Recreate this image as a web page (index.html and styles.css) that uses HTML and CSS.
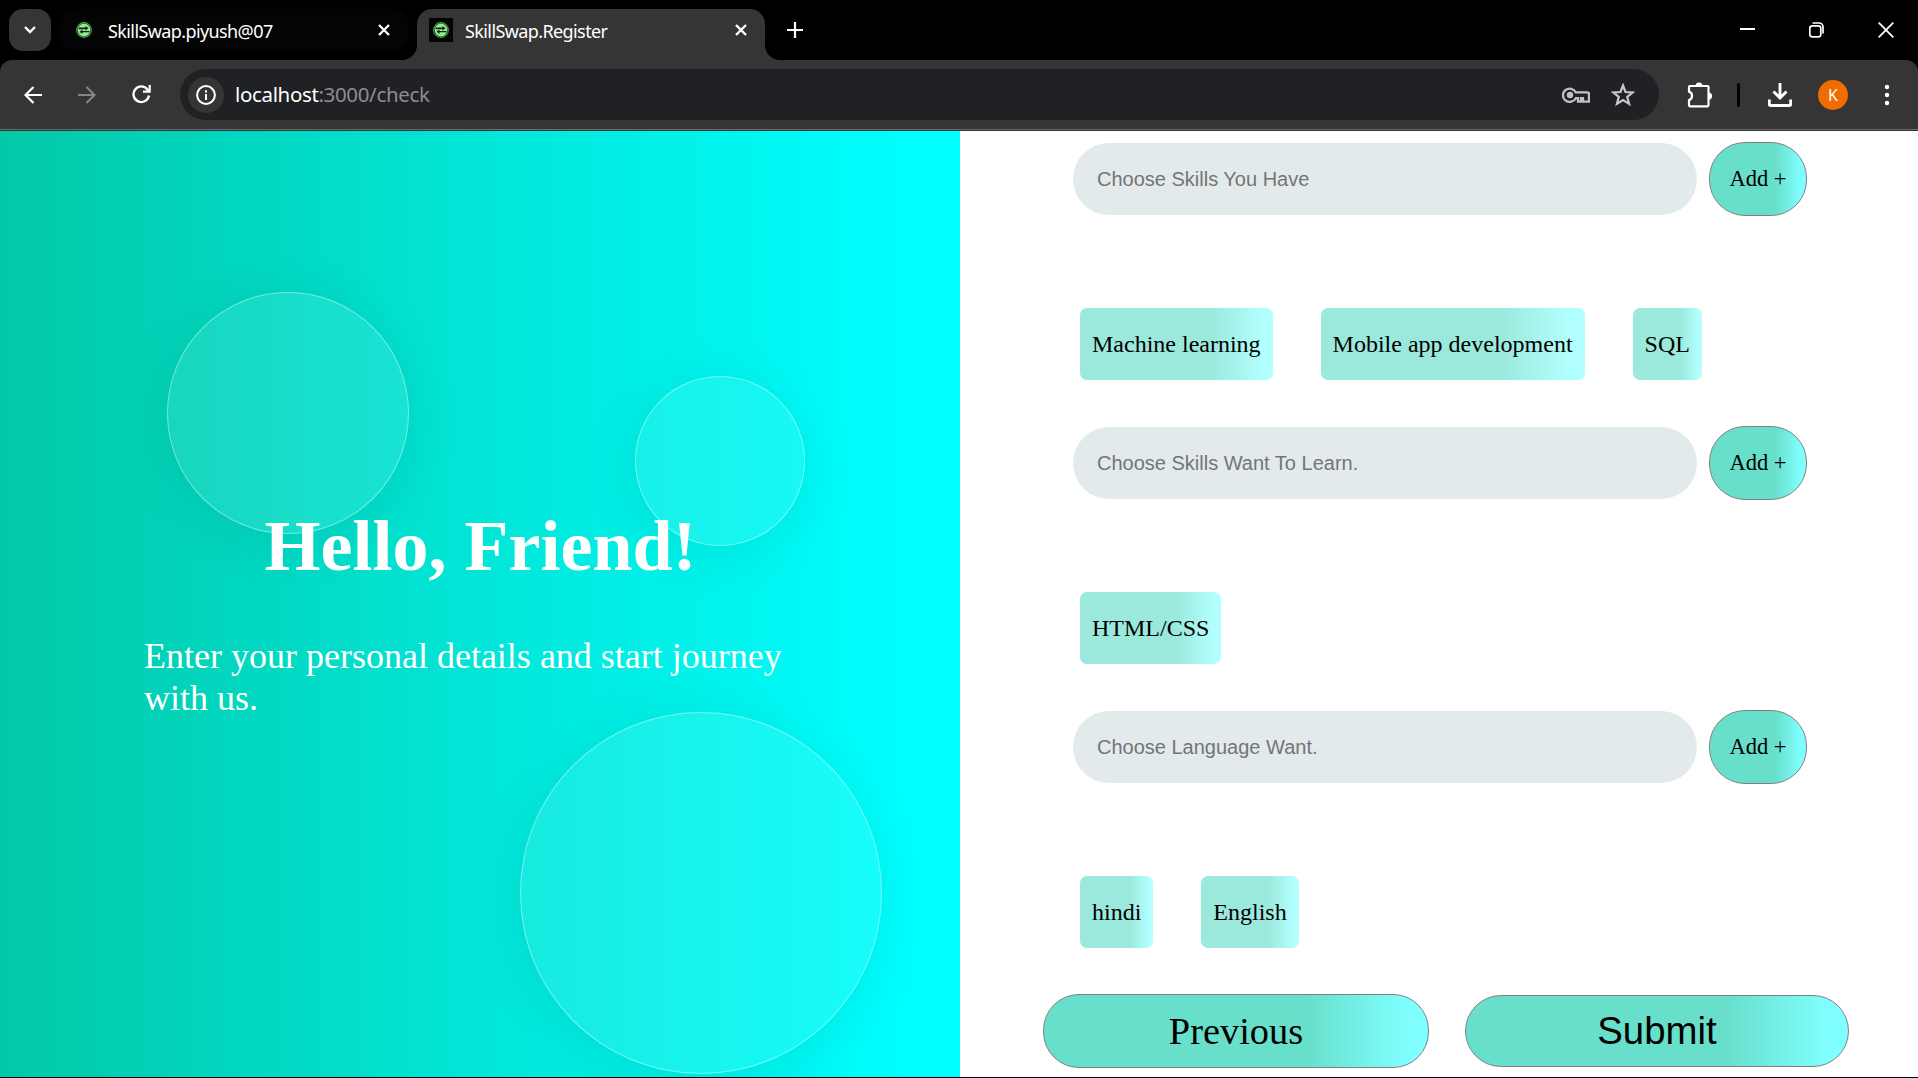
FILE: index.html
```html
<!DOCTYPE html>
<html lang="en">
<head>
<meta charset="utf-8">
<title>SkillSwap.Register</title>
<link rel="stylesheet" href="styles.css">
</head>
<body>
<svg class="defs" aria-hidden="true">
  <symbol id="favicon" viewBox="0 0 24 24">
    <rect width="24" height="24" fill="#020502"/>
    <circle cx="12" cy="12" r="7.4" fill="none" stroke="#4f9a58" stroke-width="1.1"/>
    <circle cx="12" cy="12" r="6.4" fill="#90ee90"/>
    <path d="M6.500 10.500V9.600h7V8l3 2.300-3 2.300v-1.300H6.500zM17.500 13v1.200h-7V16l-3-2.300 3-2.300V13z" fill="#0c2410"/>
  </symbol>
</svg>
<header class="tabstrip">
  <button class="tab-search"><svg width="14" height="10" viewBox="0 0 14 10"><path d="M2 2l5 5 5-5" fill="none" stroke="#fff" stroke-width="2.400"/></svg></button>
  <div class="tab">
    <svg class="favicon"><use href="#favicon"/></svg>
    <span class="tab-title">SkillSwap.piyush@07</span>
    <svg class="close" viewBox="0 0 12 12"><path d="M1 1l10 10M11 1L1 11" stroke="#fff" stroke-width="2.400"/></svg>
  </div>
  <div class="tab active">
    <svg class="favicon"><use href="#favicon"/></svg>
    <span class="tab-title">SkillSwap.Register</span>
    <svg class="close" viewBox="0 0 12 12"><path d="M1 1l10 10M11 1L1 11" stroke="#fff" stroke-width="2.400"/></svg>
  </div>
  <svg class="new-tab" width="16" height="16" viewBox="0 0 16 16"><path d="M8 0v16M0 8h16" stroke="#fff" stroke-width="2.200"/></svg>
  <div class="window-controls">
    <svg width="15" height="16" viewBox="0 0 15 16"><path d="M0 7h15" stroke="#fff" stroke-width="2"/></svg>
    <svg width="15" height="16" viewBox="0 0 15 16"><rect x=".8" y="3.800" width="11" height="11" rx="2.500" fill="none" stroke="#fff" stroke-width="1.700"/><path d="M3.500 1h6.500a4 4 0 0 1 4 4v6.500" fill="none" stroke="#fff" stroke-width="1.700"/></svg>
    <svg width="16" height="16" viewBox="0 0 16 16"><path d="M.7.700l14.600 14.600M15.300.700L.7 15.300" stroke="#fff" stroke-width="1.800"/></svg>
  </div>
</header>
<nav class="toolbar">
  <svg class="back" width="18" height="18" viewBox="0 0 18 18"><path d="M18 9H1.500M9.500 1l-8 8 8 8" fill="none" stroke="#fff" stroke-width="2.200"/></svg>
  <svg class="forward" width="18" height="18" viewBox="0 0 18 18"><path d="M0 9h16.500M8.500 1l8 8-8 8" fill="none" stroke="#868686" stroke-width="2"/></svg>
  <svg class="reload" width="19" height="19" viewBox="0 0 19 19"><path d="M17 10.500A7.800 7.800 0 1 1 15.500 4.500L17 6.500" fill="none" stroke="#fff" stroke-width="2.300"/><path d="M18.800 0v7.800H11V5.600h5.600V0z" fill="#fff"/></svg>
  <div class="omnibox">
    <span class="site-info"><svg width="20" height="20" viewBox="0 0 20 20"><circle cx="10" cy="10" r="8.900" fill="none" stroke="#fff" stroke-width="2"/><path d="M10 9v6M10 5.200v2.200" stroke="#fff" stroke-width="2"/></svg></span>
    <span class="url"><b>localhost</b>:3000/check</span>
    <svg class="key" width="28" height="16" viewBox="0 0 28 16"><path d="M13.800 5.300H25.200Q27 5.300 27 7v7.700h-6v-3.500h-2v3.500h-3v-3.500h-2.200A6.800 6.600 0 1 1 13.800 5.300z" fill="none" stroke="#c2c2c2" stroke-width="2.300"/><circle cx="8" cy="8" r="3.200" fill="#c2c2c2"/></svg>
    <svg class="star" width="24" height="24" viewBox="0 0 24 24"><path d="M12 2.500l2.500 6.500 7.300.4-5.600 4.500 1.900 7L12 17l-6.100 3.900 1.900-7-5.600-4.500L9.500 9z" fill="none" stroke="#c7c7c7" stroke-width="2.200"/></svg>
  </div>
  <svg class="puzzle" width="26" height="26" viewBox="0 0 26 26"><path d="M3 4h17.500q1 0 1 1v18.300q0 1-1 1H3q-1 0-1-1v-5.200c4-1 4-7.500 0-8.500V5q0-1 1-1z" fill="none" stroke="#fff" stroke-width="2.200"/><path d="M8.500 4a3.500 3.500 0 0 1 7 0zM21.500 10.500a3.600 3.600 0 0 1 0 7.200z" fill="#fff"/></svg>
  <span class="divider"></span>
  <svg class="download" width="24" height="24" viewBox="0 0 24 24"><path d="M12 0v14M5.500 8.500l6.500 6.500 6.500-6.500M1.300 16.500v4.700q0 1.300 1.300 1.300h18.800q1.300 0 1.300-1.300v-4.700" fill="none" stroke="#fff" stroke-width="2.900"/></svg>
  <span class="avatar">K</span>
  <svg class="menu" width="6" height="22" viewBox="0 0 6 22"><circle cx="3" cy="3" r="2.200" fill="#fff"/><circle cx="3" cy="11" r="2.200" fill="#fff"/><circle cx="3" cy="19" r="2.200" fill="#fff"/></svg>
</nav>
<main class="page">
  <section class="welcome">
    <i class="bubble bubble-large-left"></i>
    <i class="bubble bubble-small"></i>
    <i class="bubble bubble-bottom"></i>
    <h1>Hello, Friend!</h1>
    <p>Enter your personal details and start journey with us.</p>
  </section>
  <form class="skills">
    <div class="group">
      <div class="entry"><input type="text" placeholder="Choose Skills You Have"><button type="button" class="add">Add +</button></div>
      <div class="chips"><span>Machine learning</span><span>Mobile app development</span><span>SQL</span></div>
    </div>
    <div class="group">
      <div class="entry"><input type="text" placeholder="Choose Skills Want To Learn."><button type="button" class="add">Add +</button></div>
      <div class="chips"><span>HTML/CSS</span></div>
    </div>
    <div class="group">
      <div class="entry"><input type="text" placeholder="Choose Language Want."><button type="button" class="add">Add +</button></div>
      <div class="chips"><span>hindi</span><span>English</span></div>
    </div>
    <div class="actions"><button type="button" class="previous">Previous</button><button type="button" class="submit">Submit</button></div>
  </form>
</main>
</body>
</html>
```
FILE: styles.css
```css
* { box-sizing: border-box; }
body {
  margin: 0;
  width: 1918px;
  height: 1078px;
  overflow: hidden;
  display: flex;
  flex-direction: column;
  background: #000;
  font-family: "Liberation Serif", "Times New Roman", serif;
}
svg { display: block; flex: none; }
button { padding: 0; color: #000; }
.defs { position: absolute; width: 0; height: 0; }

/* Tab strip */
.tabstrip {
  height: 60px;
  flex: none;
  display: flex;
  align-items: flex-start;
  padding: 9px 24px 0 9px;
  font-family: "Noto Sans", sans-serif;
  color: #fff;
}
.tab-search {
  width: 42px;
  height: 42px;
  border: 0;
  border-radius: 14px;
  background: #353535;
  display: grid;
  place-items: center;
}
.tab {
  width: 348px;
  height: 42px;
  margin-left: 9px;
  padding: 0 18px 0 12px;
  border-radius: 15px;
  background: #040404;
  display: flex;
  align-items: center;
}
.tab.active {
  position: relative;
  height: 51px;
  margin-left: 9px;
  padding: 0 18px 9px 12px;
  border-radius: 15px 15px 0 0;
  background: #353535;
}
.tab.active::before, .tab.active::after {
  content: "";
  position: absolute;
  bottom: 0;
  width: 15px;
  height: 15px;
}
.tab.active::before { left: -15px; background: radial-gradient(circle at 0 0, #000 14.500px, #353535 15.500px); }
.tab.active::after { right: -15px; background: radial-gradient(circle at 100% 0, #000 14.500px, #353535 15.500px); }
.favicon { width: 24px; height: 24px; }
.tab-title { flex: 1; margin-left: 12px; padding-top: 2px; font-size: 18px; line-height: 24px; letter-spacing: -0.6px; white-space: nowrap; }
.close { width: 12px; height: 12px; }
.new-tab { margin: 13px 0 0 22px; }
.window-controls { margin: 13px 0 0 auto; display: flex; gap: 54px; }

/* Toolbar */
.toolbar {
  height: 71px;
  flex: none;
  display: flex;
  align-items: center;
  padding: 0 28px 2px 24px;
  background: #353535;
  border-radius: 12px 12px 0 0;
  box-shadow: inset 0 -1px #353535, inset 0 -2px #6a6a6a;
}
.forward { margin-left: 36px; }
.reload { margin-left: 36px; }
.omnibox {
  width: 1479px;
  height: 51px;
  margin-left: 29px;
  padding: 0 24px 0 8px;
  border-radius: 26px;
  background: #202124;
  display: flex;
  align-items: center;
}
.site-info { width: 36px; height: 36px; border-radius: 50%; background: #353535; display: grid; place-items: center; }
.url { flex: 1; margin-left: 11px; padding-bottom: 2px; font: 20.500px/30px "Noto Sans", sans-serif; letter-spacing: -0.35px; color: #8e8e8e; }
.url b { color: #fff; font-weight: 400; }
.star { margin-left: 21px; }
.puzzle { margin-left: 28px; }
.divider { width: 3px; height: 24px; margin-left: 24px; border-radius: 2px; background: #000; }
.download { margin-left: 28px; }
.avatar {
  width: 30px;
  height: 30px;
  margin-left: 26px;
  border-radius: 50%;
  background: #ef6c00;
  color: #fff;
  font: 16px/30px "Noto Sans", sans-serif;
  text-align: center;
}
.menu { margin-left: 36px; }

/* Registration page */
.page { height: 946px; display: flex; background: #fff; }
.welcome {
  position: relative;
  width: 960px;
  overflow: hidden;
  padding: 374px 143px 0 144px;
  background: linear-gradient(90deg, #02c8a7, #02e6d8 50%, #00ffff 95%);
  color: #fff;
}
.welcome h1 { position: relative; margin: 0; text-align: center; font-size: 72px; line-height: 83px; }
.welcome p { position: relative; margin: 47px 0 0; font-size: 36px; line-height: 42px; }
.bubble {
  position: absolute;
  border: 1px solid rgba(255, 255, 255, .4);
  border-radius: 50%;
  background: rgba(255, 255, 255, .09);
  box-shadow: 0 8px 60px rgba(0, 0, 0, .08);
}
.bubble-large-left { left: 167px; top: 161px; width: 242px; height: 242px; }
.bubble-small { left: 635px; top: 245px; width: 170px; height: 170px; }
.bubble-bottom { left: 520px; top: 581px; width: 362px; height: 362px; }

.skills { width: 958px; padding-top: 11px; }
.group { height: 284px; padding-left: 113px; }
.entry { display: flex; align-items: center; gap: 12px; }
.entry input {
  width: 624px;
  height: 72px;
  padding: 0 24px;
  border: 0;
  border-radius: 36px;
  background: #e2eaeb;
  font: 20px "Liberation Sans", Arial, sans-serif;
}
.entry input::placeholder { color: #757575; }
.add, .actions button {
  border: 1px solid #808080;
  background: linear-gradient(90deg, #68dfcb 68%, #7fffff 95%);
}
.add { width: 98px; height: 74px; border-radius: 36px; font: 22.500px "Liberation Serif", serif; }
.chips { display: flex; gap: 48px; margin: 92px 0 0 7px; }
.chips span {
  height: 72px;
  padding: 0 12px;
  border-radius: 7px;
  background: linear-gradient(90deg, #9be9dc 68%, #b2ffff 95%);
  font-size: 24px;
  line-height: 72px;
}
.actions { display: flex; align-items: center; gap: 36px; padding-left: 83px; }
.actions .previous { width: 386px; height: 74px; border-radius: 36px; font: 38.400px "Liberation Serif", serif; }
.actions .submit { width: 384px; height: 72px; border-radius: 36px; font: 38.400px "Liberation Sans", sans-serif; }
```
